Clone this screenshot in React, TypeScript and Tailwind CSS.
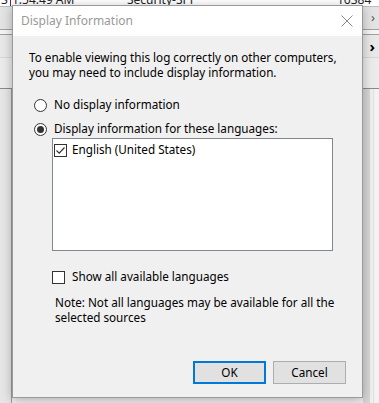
import React from 'react';

const font = { fontFamily: '"Noto Sans", "Open Sans", sans-serif' };

const Radio = ({ checked, label }: { checked?: boolean; label: string }) => (
  <div className="flex items-center h-[16px]">
    <span className="w-[13px] h-[13px] rounded-full border border-[#333] bg-white flex items-center justify-center">
      {checked && <span className="w-[7px] h-[7px] rounded-full bg-[#333]" />}
    </span>
    <span className="ml-[7px] text-[11.7px] text-black">{label}</span>
  </div>
);

const Check = ({ checked, label, gap = 'ml-[7px]' }: { checked?: boolean; label: string; gap?: string }) => (
  <div className="flex items-center h-[16px]">
    <span className="w-[13px] h-[13px] border border-[#333] bg-white flex items-center justify-center">
      {checked && (
        <svg width="11" height="11" viewBox="0 0 11 11">
          <path d="M1.5 5.5 L4.2 8.2 L9.5 2.5" fill="none" stroke="#333" strokeWidth="1.2" />
        </svg>
      )}
    </span>
    <span className={`${gap} text-[11.7px] text-black`}>{label}</span>
  </div>
);

export default function App() {
  return (
    <div className="relative w-[379px] h-[403px] overflow-hidden bg-[#f0f0f0]" style={font}>
      {/* window behind the dialog */}
      <div className="h-[13px] bg-white border-b border-[#bcbcbc] relative text-[12px] leading-[12px] text-[#222]">
        <div className="flex -mt-[6px]">
          <span className="w-[10px] pl-[1px]">3</span>
          <span className="w-[117px] border-l border-[#7a1f4a] pl-[1px]">1:54:49 AM</span>
          <span className="w-[210px]">Security-SPP</span>
          <span>16384</span>
        </div>
      </div>
      <div className="h-[22px] bg-[#e3e3e3] flex justify-end items-center pr-[4px] text-[13px] text-[#555]">›</div>
      <div className="h-[1px] bg-[#a0a0a0]" />
      <div className="h-[4px] bg-[#f4f4f4]" />
      <div className="h-[1px] bg-[#a0a0a0]" />
      <div className="h-[22px] bg-[#e8e8e8] flex justify-end items-center pr-[4px] text-[15px] font-bold text-black">›</div>
      <div className="h-[1px] bg-[#d8d8d8]" />
      <div className="h-[30px] bg-[#ebebeb]" />
      <div className="h-[1px] bg-[#8a8a8a]" />
      <div className="flex h-[320px]">
        <div className="w-[12px] bg-[#e6e6e6] border-r border-[#9c9c9c]" />
        <div className="flex-1" />
        <div className="w-[7px] bg-[#d6d6d6]" />
        <div className="w-[3px] bg-[#f0f0f0]" />
        <div className="w-[1px] bg-[#e0e0e0]" />
        <div className="w-[5px] bg-[#f2f2f2]" />
      </div>

      {/* dialog window */}
      <div className="absolute left-[12px] top-[5px] w-[351px] h-[393px] border border-[#9a9a9a] bg-[#f0f0f0] shadow-[0_2px_10px_rgba(0,0,0,0.28)] flex flex-col">
        <div className="h-[30px] bg-white flex items-center justify-between pl-[8px] pr-[8px]">
          <span className="text-[12px] text-[#999]">Display Information</span>
          <svg width="12" height="12" viewBox="0 0 12 12" className="mr-[1px]">
            <path d="M0.5 0.5 L11.5 11.5 M11.5 0.5 L0.5 11.5" stroke="#8a8a8a" strokeWidth="1" />
          </svg>
        </div>

        <div className="flex-1 flex flex-col pl-[16px] pr-[16px]">
          <p className="mt-[14px] text-[11.7px] leading-[15px] text-black">
            To enable viewing this log correctly on other computers,
            <br />
            you may need to include display information.
          </p>

          <div className="mt-[17px] pl-[5px] flex flex-col gap-[8px]">
            <Radio label="No display information" />
            <Radio checked label="Display information for these languages:" />
          </div>

          <div className="mt-[1px] ml-[23px] w-[281px] h-[113px] bg-white border border-[#828790] pl-[1px] pt-[3px]">
            <Check checked label="English (United States)" gap="ml-[5px]" />
          </div>

          <div className="mt-[18px] ml-[23px]">
            <Check label="Show all available languages" />
          </div>

          <p className="mt-[10px] ml-[26px] text-[11.7px] leading-[15px] text-black">
            Note: Not all languages may be available for all the
            <br />
            selected sources
          </p>

          <div className="mt-auto mb-[13px] flex justify-end gap-[7px]">
            <button className="w-[73px] h-[23px] bg-[#e1e1e1] border-2 border-[#0078d7] text-[11.7px] text-black">
              OK
            </button>
            <button className="w-[73px] h-[23px] bg-[#e1e1e1] border border-[#adadad] text-[11.7px] text-black">
              Cancel
            </button>
          </div>
        </div>
      </div>
    </div>
  );
}
